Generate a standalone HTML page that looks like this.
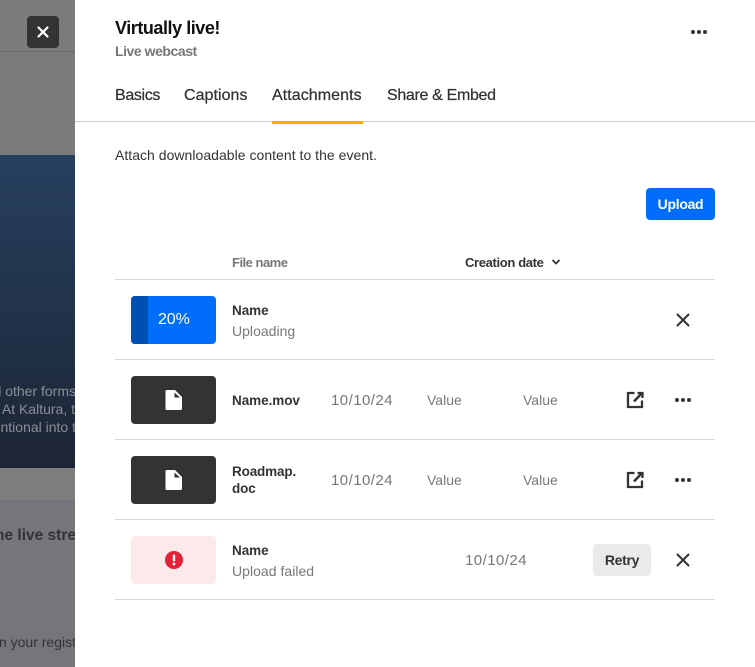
<!DOCTYPE html>
<html><head><meta charset="utf-8">
<style>
html,body{margin:0;padding:0}
body{width:755px;height:667px;overflow:hidden;position:relative;background:#fff;font-family:"Liberation Sans",sans-serif;color:#333}
.a{position:absolute;white-space:nowrap}
.t{position:absolute;white-space:nowrap;line-height:20px}
.hr{position:absolute;left:115px;width:600px;height:1px;background:#d9d9d9}
.thumb{position:absolute;left:131px;width:85px;height:48px;border-radius:4px}
.b{font-weight:700;font-size:13.5px;color:#333;letter-spacing:-.05px}
.g{font-size:14px;color:#777;letter-spacing:0}
.d{font-size:15px;color:#777;letter-spacing:.45px}
.tab{font-size:16px;font-weight:400;color:#333;top:86px;-webkit-text-stroke:.25px #333}
svg{position:absolute;display:block}
</style></head><body>
<div class="a" style="left:0;top:0;width:75px;height:667px;background:#7b7b7b;overflow:hidden">
 <div class="a" style="left:0;top:51px;width:75px;height:1px;background:#6b6b6b"></div>
 <div class="a" style="left:0;top:155px;width:75px;height:313px;background:linear-gradient(#27405f,#1c2534)"></div>
 <div class="a" style="left:0;top:468px;width:75px;height:32px;background:#7d7d7d"></div>
 <div class="a" style="left:0;top:500px;width:75px;height:167px;background:#75767b"></div>
 <div class="t" style="right:-1px;top:381px;font-size:14px;color:#8a8f97">all other forms</div>
 <div class="t" style="right:0;top:399px;font-size:14px;color:#8a8f97">. At Kaltura, t</div>
 <div class="t" style="right:-1px;top:417px;font-size:14px;color:#8a8f97">ntional into t</div>
 <div class="t" style="right:-1px;top:526px;font-size:15.5px;font-weight:700;color:#333">ne live stre</div>
 <div class="t" style="right:-1px;top:632px;font-size:14px;color:#333">n your regist</div>
</div>
<div class="a" style="left:27px;top:16px;width:32px;height:32px;border-radius:4px;background:#333"></div>
<svg style="left:27px;top:16px" width="32" height="32" viewBox="0 0 32 32"><path d="M11.500 11.500L20.500 20.500M20.500 11.500L11.500 20.500" stroke="#fff" stroke-width="2.200" stroke-linecap="round"/></svg>
<div class="a" style="left:75px;top:0;width:680px;height:667px;background:#fff"></div>

<div class="t" style="left:115px;top:18px;font-size:18px;font-weight:700;color:#111;letter-spacing:-.45px">Virtually live!</div>
<div class="t" style="left:115px;top:41px;font-size:14px;font-weight:700;color:#777;letter-spacing:-.45px">Live webcast</div>
<svg style="left:690px;top:28px" width="18" height="8" viewBox="0 0 18 8"><circle cx="3" cy="4" r="2" fill="#333"/><circle cx="9" cy="4" r="2" fill="#333"/><circle cx="15" cy="4" r="2" fill="#333"/></svg>

<div class="t tab" style="left:115px;letter-spacing:-.35px">Basics</div>
<div class="t tab" style="left:184px;letter-spacing:.05px">Captions</div>
<div class="t tab" style="left:272px;letter-spacing:.07px">Attachments</div>
<div class="t tab" style="left:387px;letter-spacing:-.33px">Share &amp; Embed</div>
<div class="a" style="left:75px;top:121px;width:680px;height:1px;background:#ccc"></div>
<div class="a" style="left:272px;top:121px;width:91px;height:3px;background:#ffab00"></div>

<div class="t" style="left:115px;top:145px;font-size:14px;color:#333;letter-spacing:.03px">Attach downloadable content to the event.</div>
<div class="a" style="left:646px;top:188px;width:69px;height:32px;border-radius:4px;background:#006efa;color:#fff;font-size:14px;font-weight:700;line-height:32px;text-align:center;letter-spacing:-.3px">Upload</div>

<div class="t" style="left:232px;top:253px;font-size:13px;font-weight:700;color:#777;letter-spacing:-.5px">File name</div>
<div class="t" style="left:465px;top:253px;font-size:13px;font-weight:700;color:#333;letter-spacing:-.35px">Creation date</div>
<svg style="left:550px;top:257px" width="12" height="10" viewBox="0 0 12 10"><path d="M2.500 3L6 6.500L9.500 3" stroke="#333" stroke-width="1.800" fill="none"/></svg>
<div class="hr" style="top:279px"></div>
<div class="hr" style="top:359px"></div>
<div class="hr" style="top:439px"></div>
<div class="hr" style="top:519px"></div>
<div class="hr" style="top:599px"></div>

<!-- row 1 -->
<div class="thumb" style="top:296px;background:#006efa;overflow:hidden"><div class="a" style="left:0;top:0;width:17px;height:48px;background:#004fb3"></div></div>
<div class="t" style="left:158px;top:310px;font-size:16px;color:#fff;letter-spacing:-.1px">20%</div>
<div class="t b" style="left:232px;top:301px">Name</div>
<div class="t g" style="left:232px;top:321px;font-size:14px;letter-spacing:.02px">Uploading</div>
<svg style="left:673px;top:310px" width="20" height="20" viewBox="0 0 20 20"><path d="M4.500 4.500L15.500 15.500M15.500 4.500L4.500 15.500" stroke="#333" stroke-width="2" stroke-linecap="round"/></svg>

<!-- row 2 -->
<div class="thumb" style="top:376px;background:#333"></div>
<svg style="left:165px;top:390px" width="17" height="20" viewBox="0 0 17 20"><path d="M0.500 1.500a1.500 1.500 0 0 1 1.500-1.500H10L17 7V18.500a1.500 1.500 0 0 1-1.500 1.500H2a1.500 1.500 0 0 1-1.500-1.500Z" fill="#fff"/><path d="M9.500 2.500L15 7.500H9.500Z" fill="#333"/></svg>
<div class="t b" style="left:232px;top:391px">Name.mov</div>
<div class="t d" style="left:331px;top:391px">10/10/24</div>
<div class="t g" style="left:427px;top:390px">Value</div>
<div class="t g" style="left:523px;top:390px">Value</div>
<svg style="left:625px;top:390px" width="20" height="20" viewBox="0 0 20 20"><path d="M9.500 3H3V17H17V10.500" stroke="#333" stroke-width="2.300" fill="none"/><path d="M12.500 3H17.500V8" stroke="#333" stroke-width="2.300" fill="none"/><path d="M17 3L9 11.500" stroke="#333" stroke-width="2.500" fill="none"/></svg>
<svg style="left:674px;top:396px" width="18" height="8" viewBox="0 0 18 8"><circle cx="3" cy="4" r="2" fill="#333"/><circle cx="9" cy="4" r="2" fill="#333"/><circle cx="15" cy="4" r="2" fill="#333"/></svg>

<!-- row 3 -->
<div class="thumb" style="top:456px;background:#333"></div>
<svg style="left:165px;top:470px" width="17" height="20" viewBox="0 0 17 20"><path d="M0.500 1.500a1.500 1.500 0 0 1 1.500-1.500H10L17 7V18.500a1.500 1.500 0 0 1-1.500 1.500H2a1.500 1.500 0 0 1-1.500-1.500Z" fill="#fff"/><path d="M9.500 2.500L15 7.500H9.500Z" fill="#333"/></svg>
<div class="t b" style="left:232px;top:463px;line-height:17px;letter-spacing:-.15px">Roadmap.<br>doc</div>
<div class="t d" style="left:331px;top:471px">10/10/24</div>
<div class="t g" style="left:427px;top:470px">Value</div>
<div class="t g" style="left:523px;top:470px">Value</div>
<svg style="left:625px;top:470px" width="20" height="20" viewBox="0 0 20 20"><path d="M9.500 3H3V17H17V10.500" stroke="#333" stroke-width="2.300" fill="none"/><path d="M12.500 3H17.500V8" stroke="#333" stroke-width="2.300" fill="none"/><path d="M17 3L9 11.500" stroke="#333" stroke-width="2.500" fill="none"/></svg>
<svg style="left:674px;top:476px" width="18" height="8" viewBox="0 0 18 8"><circle cx="3" cy="4" r="2" fill="#333"/><circle cx="9" cy="4" r="2" fill="#333"/><circle cx="15" cy="4" r="2" fill="#333"/></svg>

<!-- row 4 -->
<div class="thumb" style="top:536px;background:#fce9e9"></div>
<svg style="left:165px;top:551px" width="18" height="18" viewBox="0 0 18 18"><circle cx="9" cy="9" r="9" fill="#e12237"/><rect x="7.800" y="3.500" width="2.400" height="7" rx="1" fill="#fff"/><circle cx="9" cy="13" r="1.400" fill="#fff"/></svg>
<div class="t b" style="left:232px;top:541px">Name</div>
<div class="t g" style="left:232px;top:561px;font-size:14px;letter-spacing:.03px">Upload failed</div>
<div class="t d" style="left:465px;top:551px">10/10/24</div>
<div class="a" style="left:593px;top:544px;width:58px;height:32px;border-radius:4px;background:#eaeaea;color:#333;font-size:14px;font-weight:700;line-height:32px;text-align:center;letter-spacing:-.3px">Retry</div>
<svg style="left:673px;top:550px" width="20" height="20" viewBox="0 0 20 20"><path d="M4.500 4.500L15.500 15.500M15.500 4.500L4.500 15.500" stroke="#333" stroke-width="2" stroke-linecap="round"/></svg>
</body></html>
